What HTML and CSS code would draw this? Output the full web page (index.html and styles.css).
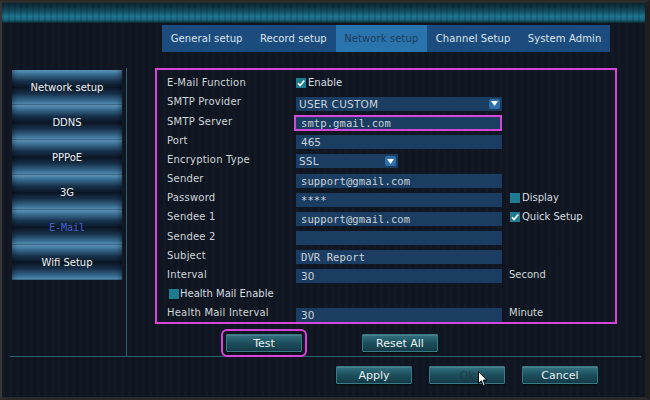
FILE: index.html
```html
<!DOCTYPE html>
<html lang="en">
<head>
    <meta charset="UTF-8">
    <title>Network setup - E-Mail</title>
    <link rel="stylesheet" href="styles.css">
</head>
<body>
    <div class="frame">
        <div class="titlebar"></div>

        <nav class="tabs">
            <span class="tab">General setup</span>
            <span class="tab">Record setup</span>
            <span class="tab active">Network setup</span>
            <span class="tab">Channel Setup</span>
            <span class="tab">System Admin</span>
        </nav>

        <div class="main">
            <aside class="sidebar">
                <div class="side-btn">Network setup</div>
                <div class="side-btn">DDNS</div>
                <div class="side-btn">PPPoE</div>
                <div class="side-btn">3G</div>
                <div class="side-btn current">E-Mail</div>
                <div class="side-btn">Wifi Setup</div>
            </aside>

            <section class="panel">
                <div class="form-box">
                    <div class="row">
                        <span class="label">E-Mail Function</span>
                        <span class="check">
                            <span class="box"><svg width="10" height="10" viewBox="0 0 10 10"><path d="M2 5.2L4.1 7.6L8.3 2.4" stroke="#fff" stroke-width="1.6" fill="none"/></svg></span>
                            Enable
                        </span>
                    </div>
                    <div class="row">
                        <span class="label">SMTP Provider</span>
                        <span class="field sans">USER CUSTOM<span class="arrow"><svg width="7" height="5" viewBox="0 0 7 5"><path d="M0 0H7L3.5 5Z" fill="#fff"/></svg></span></span>
                    </div>
                    <div class="row">
                        <span class="label">SMTP Server</span>
                        <span class="field mono hl">smtp.gmail.com</span>
                    </div>
                    <div class="row">
                        <span class="label">Port</span>
                        <span class="field">465</span>
                    </div>
                    <div class="row">
                        <span class="label">Encryption Type</span>
                        <span class="field sans short">SSL<span class="arrow"><svg width="7" height="5" viewBox="0 0 7 5"><path d="M0 0H7L3.5 5Z" fill="#fff"/></svg></span></span>
                    </div>
                    <div class="row">
                        <span class="label">Sender</span>
                        <span class="field mono">support@gmail.com</span>
                    </div>
                    <div class="row">
                        <span class="label">Password</span>
                        <span class="field mono">****</span>
                        <span class="check side"><span class="box"></span>Display</span>
                    </div>
                    <div class="row">
                        <span class="label">Sendee 1</span>
                        <span class="field mono">support@gmail.com</span>
                        <span class="check side">
                            <span class="box"><svg width="10" height="10" viewBox="0 0 10 10"><path d="M2 5.2L4.1 7.6L8.3 2.4" stroke="#fff" stroke-width="1.6" fill="none"/></svg></span>
                            Quick Setup
                        </span>
                    </div>
                    <div class="row">
                        <span class="label">Sendee 2</span>
                        <span class="field mono"></span>
                    </div>
                    <div class="row">
                        <span class="label">Subject</span>
                        <span class="field mono">DVR Report</span>
                    </div>
                    <div class="row">
                        <span class="label">Interval</span>
                        <span class="field">30</span>
                        <span class="unit">Second</span>
                    </div>
                    <div class="row">
                        <span class="check health"><span class="box"></span>Health Mail Enable</span>
                    </div>
                    <div class="row">
                        <span class="label">Health Mail Interval</span>
                        <span class="field">30</span>
                        <span class="unit">Minute</span>
                    </div>
                </div>

                <div class="actions">
                    <button class="btn test">Test</button>
                    <button class="btn">Reset All</button>
                </div>
            </section>
        </div>

        <div class="rule"></div>

        <div class="footer">
            <button class="btn">Apply</button>
            <button class="btn ok">Ok
                <svg class="cursor" width="10" height="16" viewBox="0 0 10 16"><path d="M0.5 0.5V12.5L3.3 9.8L5.3 14.6L7.2 13.8L5.2 9.1H8.9Z" fill="#fff" stroke="#000" stroke-width="1"/></svg>
            </button>
            <button class="btn">Cancel</button>
        </div>
    </div>
</body>
</html>
```

FILE: styles.css
```css
* {
    box-sizing: border-box;
}
html, body {
    margin: 0;
    padding: 0;
}
body {
    background: #1c1c1c;
    font-family: "DejaVu Sans", sans-serif;
    font-size: 10px;
    color: #cfd5da;
    overflow: hidden;
}
.frame {
    width: 650px;
    height: 400px;
    border-style: solid;
    border-width: 3px 5px 3px 2px;
    border-color: #2c2c2c #1f1f1f #2a2a2a #363636;
    background:
        repeating-linear-gradient(90deg, rgba(255,255,255,0.012) 0 3px, transparent 3px 7px),
        #0f1621;
    overflow: hidden;
}
.titlebar {
    height: 20px;
    background:
        repeating-linear-gradient(90deg, rgba(0,0,0,0.12) 0 2px, transparent 2px 6px),
        linear-gradient(to bottom, #0b2530 0%, #124659 35%, #1e7590 68%, #186479 85%, #0a2630 100%);
}

/* top tabs */
.tabs {
    display: flex;
    width: max-content;
    height: 27px;
    margin: 2px 0 0 160px;
}
.tab {
    padding: 0 8.7px;
    line-height: 27px;
    background: #1b4c7d;
    color: #dde6ee;
    letter-spacing: 0.1px;
}
.tab.active {
    background: #2a74ad;
    color: #1d3c5b;
}

.main {
    display: flex;
    height: 288px;
    margin-top: 16px;
}

/* left menu */
.sidebar {
    width: 125px;
    padding: 2px 0 0 10px;
    border-right: 1px solid #2b6470;
}
.side-btn {
    width: 110px;
    height: 35px;
    line-height: 35px;
    text-align: center;
    color: #eef2f5;
    background: linear-gradient(to bottom, #5f9abf 0%, #3a6e93 12%, #17314b 32%, #0b1624 50%, #17314b 68%, #386b90 88%, #5590b6 98%, #0c1724 100%);
    box-shadow: inset 5px 0 5px -3px rgba(0,0,0,0.35), inset -5px 0 5px -3px rgba(0,0,0,0.35);
}
.side-btn.current {
    font-family: "DejaVu Sans Mono", monospace;
    color: #4462d0;
}

/* e-mail form */
.panel {
    margin-left: 28px;
}
.form-box {
    width: 462px;
    height: 256px;
    border: 2px solid #d845dc;
    padding: 3px 0 0 10px;
}
.row {
    display: grid;
    grid-template-columns: 129px 206px 1fr;
    height: 19.2px;
    align-items: center;
}
.label {
    letter-spacing: 0.2px;
}
.field {
    display: flex;
    align-items: center;
    justify-content: space-between;
    height: 14px;
    margin-top: 4px;
    padding: 0 5px;
    background: #1a3d61;
    color: #cbd4dc;
    font-size: 10.5px;
}
.field.sans {
    padding-left: 3px;
    letter-spacing: 0.2px;
}
.field.mono {
    font-family: "DejaVu Sans Mono", monospace;
    letter-spacing: 0.1px;
}
.field.short {
    width: 102px;
}
.field.hl {
    width: 208px;
    height: 16px;
    margin-left: -2px;
    padding-left: 5px;
    border: 2px solid #d845dc;
}
.arrow {
    display: flex;
    align-items: center;
    justify-content: center;
    width: 11px;
    height: 10px;
    margin-right: -3px;
    border-radius: 2px;
    background: #2d6fa6;
}
.check {
    display: flex;
    align-items: center;
    gap: 2px;
    color: #d6dce0;
}
.check.side {
    padding-left: 8px;
}
.check.health {
    grid-column: 1 / 3;
    padding-left: 2px;
    gap: 1px;
}
.box {
    display: inline-flex;
    width: 10px;
    height: 10px;
    background: #1e7b90;
}
.unit {
    padding-left: 7px;
}

/* buttons */
.actions {
    display: flex;
    gap: 60px;
    margin-top: 10px;
    padding-left: 71px;
}
.btn {
    width: 76px;
    height: 18px;
    padding: 0;
    font-family: "DejaVu Sans", sans-serif;
    font-size: 11px;
    color: #e8f0f2;
    background: linear-gradient(to bottom, #32717f 0%, #1d4f5d 50%, #143a46 100%);
    border: 1px solid #3a7986;
    border-radius: 1px;
    box-shadow: inset 0 1px 0 rgba(255,255,255,0.12), 0 1px 2px rgba(0,0,0,0.6);
}
.btn.test {
    outline: 2px solid #d845dc;
    outline-offset: 3px;
}
.btn.ok {
    position: relative;
    color: #1f3d48;
}
.cursor {
    position: absolute;
    left: 48px;
    top: 4px;
}
.rule {
    height: 1px;
    margin: 0 4px 0 8px;
    background: #2b6470;
}
.footer {
    display: flex;
    gap: 17px;
    padding: 9px 0 0 334px;
}
```
